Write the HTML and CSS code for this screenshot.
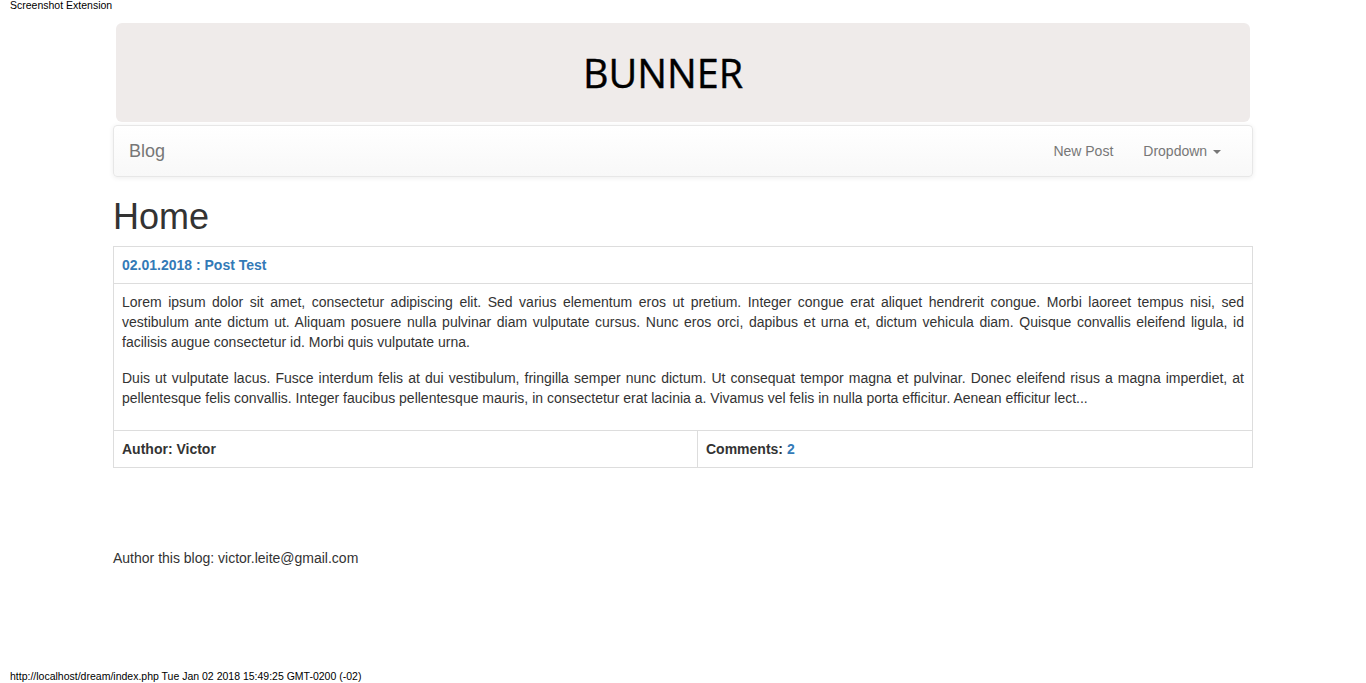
FILE: index.html
```html
<!DOCTYPE html>
<html lang="en">
<head>
<meta charset="utf-8">
<title>Blog</title>
<link rel="stylesheet" href="styles.css">
</head>
<body>
<div class="page">
  <div class="shot-head">Screenshot Extension</div>
  <main class="container">
    <div class="banner"><span class="banner-text">BUNNER</span></div>
    <nav class="navbar">
      <a class="brand" href="#">Blog</a>
      <ul class="nav-right">
        <li><a href="#">New Post</a></li>
        <li><a href="#">Dropdown <span class="caret"></span></a></li>
      </ul>
    </nav>
    <h1 class="title">Home</h1>
    <table class="post">
      <colgroup><col class="col-a"><col></colgroup>
      <tr><th colspan="2" class="post-title"><a href="#">02.01.2018 : Post Test</a></th></tr>
      <tr><td colspan="2" class="post-body">
        <p>Lorem ipsum dolor sit amet, consectetur adipiscing elit. Sed varius elementum eros ut pretium. Integer congue erat aliquet hendrerit congue. Morbi laoreet tempus nisi, sed vestibulum ante dictum ut. Aliquam posuere nulla pulvinar diam vulputate cursus. Nunc eros orci, dapibus et urna et, dictum vehicula diam. Quisque convallis eleifend ligula, id facilisis augue consectetur id. Morbi quis vulputate urna.</p>
        <p>Duis ut vulputate lacus. Fusce interdum felis at dui vestibulum, fringilla semper nunc dictum. Ut consequat tempor magna et pulvinar. Donec eleifend risus a magna imperdiet, at pellentesque felis convallis. Integer faucibus pellentesque mauris, in consectetur erat lacinia a. Vivamus vel felis in nulla porta efficitur. Aenean efficitur lect...</p>
      </td></tr>
      <tr><th>Author: Victor</th><th>Comments: <a href="#">2</a></th></tr>
    </table>
    <footer class="blog-footer">Author this blog: victor.leite@gmail.com</footer>
  </main>
  <div class="shot-foot">http://localhost/dream/index.php Tue Jan 02 2018 15:49:25 GMT-0200 (-02)</div>
</div>
</body>
</html>
```

FILE: styles.css
```css
* { box-sizing: border-box; }
html, body { margin: 0; padding: 0; }
body {
  font-family: "Liberation Sans", Arial, Helvetica, sans-serif;
  font-size: 14px;
  line-height: 1.42857;
  color: #333;
  background: #fff;
}
a { color: #337ab7; text-decoration: none; }
.page {
  min-height: 683px;
  display: flex;
  flex-direction: column;
}
.shot-head {
  font-size: 10.5px;
  line-height: 11px;
  color: #000;
  padding: 0 0 0 10px;
  height: 12px;
}
.shot-foot {
  margin-top: auto;
  font-size: 10.5px;
  line-height: 12px;
  color: #000;
  padding: 0 0 1px 10px;
}
.container {
  width: 1140px;
  margin: 0 auto;
}
.banner {
  margin: 11px 3px 0;
  height: 99px;
  border-radius: 6px;
  background: #efebea;
  display: flex;
  align-items: center;
  justify-content: center;
}
.banner-text {
  font-family: "Open Sans", "Noto Sans", sans-serif;
  font-size: 39.5px;
  color: #000;
  -webkit-text-stroke: 0.4px #000;
  padding-top: 2px;
  margin-right: 40px;
}
.navbar {
  margin-top: 3px;
  height: 52px;
  border: 1px solid #e7e7e7;
  border-radius: 4px;
  background-image: linear-gradient(to bottom, #fff 0, #f8f8f8 100%);
  box-shadow: inset 0 1px 0 rgba(255,255,255,.15), 0 1px 5px rgba(0,0,0,.075);
  display: flex;
  justify-content: space-between;
  align-items: stretch;
  padding: 0 16px 0 0;
}
.brand {
  padding: 15px 15px;
  font-size: 18px;
  line-height: 20px;
  color: #777;
}
.nav-right {
  list-style: none;
  margin: 0;
  padding: 0;
  display: flex;
}
.nav-right a {
  display: block;
  padding: 15px 15px;
  line-height: 20px;
  color: #777;
}
.caret {
  display: inline-block;
  width: 0;
  height: 0;
  margin-left: 2px;
  vertical-align: middle;
  border-top: 4px solid #777;
  border-right: 4px solid transparent;
  border-left: 4px solid transparent;
}
.title {
  font-family: "Liberation Sans", Arial, sans-serif;
  font-weight: 500;
  font-size: 36px;
  line-height: 1.1;
  margin: 20px 0 9px;
  color: #333;
}
.post {
  width: 100%;
  border-collapse: collapse;
  table-layout: fixed;
}
.col-a { width: 584px; }
.post th, .post td {
  border: 1px solid #ddd;
  padding: 8px;
  text-align: left;
  vertical-align: top;
  line-height: 20px;
}
.post th { font-weight: bold; }
.post-body p { margin: 0 0 16px; text-align: justify; }
.post-body p:last-child { margin-bottom: 14px; }
.blog-footer {
  margin-top: 80px;
  line-height: 20px;
}
```
